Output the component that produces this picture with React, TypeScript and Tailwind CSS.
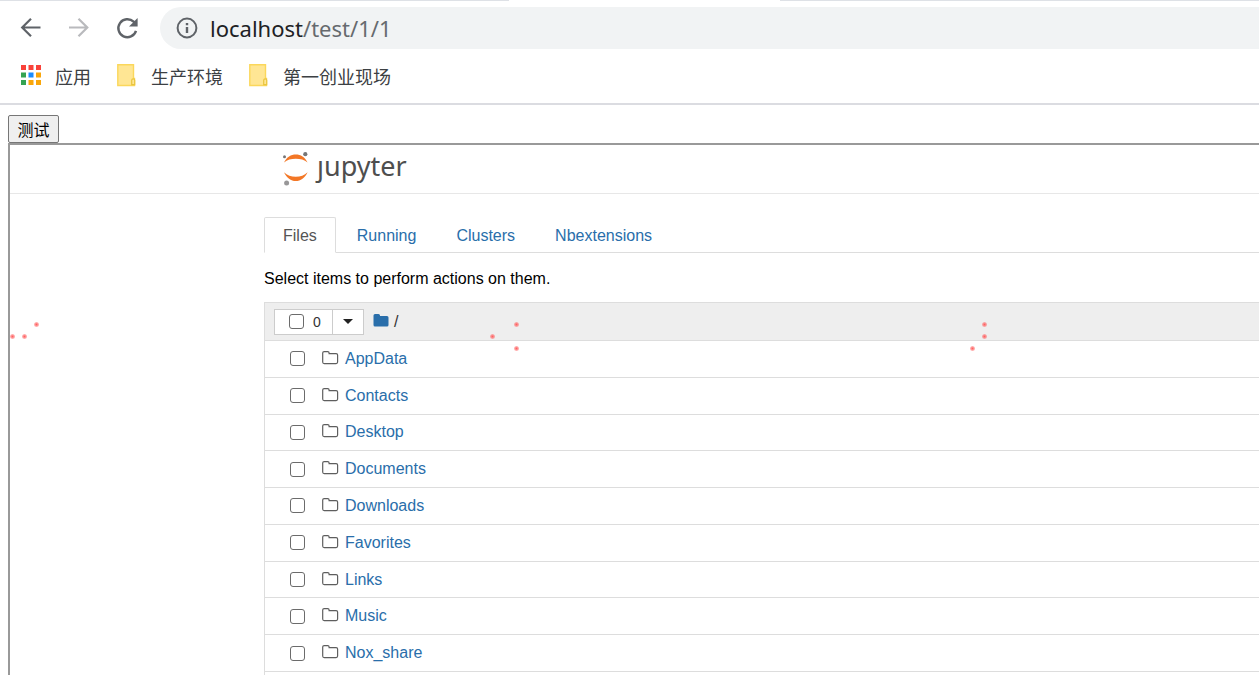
import { clsx } from 'clsx';
import { useState } from 'react';

const tabs = ['Files', 'Running', 'Clusters', 'Nbextensions'];

const folders = [
  'AppData',
  'Contacts',
  'Desktop',
  'Documents',
  'Downloads',
  'Favorites',
  'Links',
  'Music',
  'Nox_share',
];

const bookmarks = ['生产环境', '第一创业现场'];

const appColors = [
  '#f9423a',
  '#f9423a',
  '#f9423a',
  '#34a353',
  '#1a8cff',
  '#f9a60a',
  '#34a353',
  '#f9a60a',
  '#f9a60a',
];

// pointer sparks floating over the page
const sparks = [
  [12, 336],
  [24, 336],
  [36, 324],
  [492, 336],
  [516, 324],
  [516, 348],
  [984, 324],
  [984, 336],
  [972, 348],
];

const checkboxClass =
  'size-[15px] shrink-0 appearance-none rounded-[3px] border border-[#6b6b6b] bg-white checked:bg-[#296eaa]';

const BackIcon = () => (
  <svg viewBox="0 0 24 24" className="size-6" fill="none" stroke="currentColor" strokeWidth="2.2">
    <path d="M21.500 11.500H3.500M12 2.700 3.200 11.500l8.800 8.800" />
  </svg>
);

const ForwardIcon = () => (
  <svg viewBox="0 0 24 24" className="size-6" fill="none" stroke="currentColor" strokeWidth="2.2">
    <path d="M2 11.500h18M11.500 2.700l8.800 8.800-8.800 8.800" />
  </svg>
);

const ReloadIcon = () => (
  <svg viewBox="0 0 24 24" className="size-6" fill="none" stroke="currentColor" strokeWidth="2.4">
    <path d="M21 14.800A9 9 0 1 1 18.600 5.700L20 7.100" />
    <path d="M22.600 2v8.600H14z" fill="currentColor" stroke="none" />
  </svg>
);

const InfoIcon = () => (
  <svg viewBox="0 0 22 22" className="size-[22px]" fill="none" stroke="#5f6368" strokeWidth="2">
    <circle cx="11" cy="11" r="9.4" />
    <path d="M11 10v6M11 6v2.2" strokeWidth="2.4" />
  </svg>
);

const AppsIcon = () => (
  <svg viewBox="0 0 20 22" className="h-[22px] w-5">
    {appColors.map((color, i) => (
      <rect
        key={i}
        x={(i % 3) * 7.5}
        y={Math.floor(i / 3) * 7.5}
        width="5"
        height="5"
        fill={color}
      />
    ))}
  </svg>
);

const BookmarkIcon = () => (
  <svg viewBox="0 0 19 24" className="h-6 w-[19px]">
    <path d="M.8.8h15.700v13.700h1v7H.8z" fill="#ffe694" stroke="#fbd75b" strokeWidth="1.400" />
    <path d="M14.700 20.600v-4.400q0-1.400 1.500-1.400t1.500 1.400v4.400z" fill="#ffe694" stroke="#e9c53f" strokeWidth="1.200" />
  </svg>
);

const JupyterMark = () => (
  <svg viewBox="0 0 26 34" className="h-[34px] w-[26px]">
    <path d="M1 10.600C3.600 4.800 8 2.400 12.800 2.400S22 4.800 24.600 10.600C21.400 7.800 17.400 6.800 12.800 6.800S4.200 7.800 1 10.600z" fill="#f37726" />
    <path d="M1 20.200C3.600 26 8 29 12.800 29s9.200-3 11.800-8.800C21.400 23.400 17.400 24.800 12.800 24.800S4.200 23.400 1 20.200z" fill="#f37726" />
    <circle cx="1.500" cy="4.700" r="1.500" fill="#767677" />
    <circle cx="22.300" cy="2.200" r="2.100" fill="#767677" />
    <circle cx="3.600" cy="31" r="2.500" fill="#989798" />
  </svg>
);

const FolderOutline = () => (
  <svg viewBox="0 0 17 16" className="h-4 w-[17px]" fill="none" stroke="#5e5e5e" strokeWidth="1.200">
    <path d="M2.200.6h3.500q1.400 0 1.400 1.400v.6h7q1.500 0 1.500 1.500v7q0 1.500-1.500 1.500H2.200q-1.500 0-1.500-1.500v-9q0-1.500 1.500-1.500z" />
  </svg>
);

const BrowserBar = () => (
  <header className="border-b-2 border-[#dbdce1] pb-[14px]">
    <div className="flex h-px">
      <div className="w-[509px] bg-[#dee1e6]" />
      <div className="w-[271px]" />
      <div className="flex-1 bg-[#dee1e6]" />
    </div>
    <div className="flex items-center pt-[6px] pl-[19px]">
      <button type="button" aria-label="Back" className="text-[#5f6368]">
        <BackIcon />
      </button>
      <button type="button" aria-label="Forward" className="ml-6 text-[#b9babd]" disabled>
        <ForwardIcon />
      </button>
      <button type="button" aria-label="Reload" className="ml-6 text-[#5f6368]">
        <ReloadIcon />
      </button>
      <div className="ml-[21px] flex h-[42px] flex-1 items-center gap-3 rounded-l-full bg-[#f1f3f4] pl-4">
        <InfoIcon />
        <p className="font-['Noto_Sans',sans-serif] text-[22px] leading-7 text-[#666a6e]">
          <span className="text-[#202124]">localhost</span>/test/1/1
        </p>
      </div>
    </div>
    <nav className="mt-[14px] flex h-[26px] items-center pl-[21px] font-['Noto_Sans_CJK_SC',sans-serif] text-[18px] leading-[26px] text-[#3c4043]">
      <a href="#apps" className="flex items-center gap-[14px]">
        <AppsIcon />
        应用
      </a>
      {bookmarks.map((name) => (
        <a key={name} href="#bookmark" className="ml-[26px] flex items-center gap-[15px]">
          <BookmarkIcon />
          {name}
        </a>
      ))}
    </nav>
  </header>
);

const FileList = () => (
  <section className="mt-[11px] border-t border-l border-[#dddddd]">
    <div className="flex h-[38px] items-center border-b border-[#dddddd] bg-[#eeeeee] pl-[9px]">
      <div className="flex h-[26px] border border-[#cccccc] bg-white text-[14px] text-[#333333]">
        <label className="flex w-[57px] items-center gap-[9px] pl-[14px]">
          <input type="checkbox" className={checkboxClass} />0
        </label>
        <button
          type="button"
          aria-label="Select by type"
          className="flex w-[31px] items-center justify-center border-l border-[#cccccc]"
        >
          <svg viewBox="0 0 10 5" className="h-[5px] w-[10px]">
            <path d="M0 0h10L5 5z" fill="#222" />
          </svg>
        </button>
      </div>
      <a href="#root" aria-label="Home folder" className="ml-[9px]">
        <svg viewBox="0 0 16 16" className="size-4">
          <path d="M2 0h3.500Q7 0 7 1.500V2h7q1.500 0 1.500 1.500v7.500q0 1.500-1.500 1.500H2q-1.500 0-1.500-1.500v-9.500Q.5 0 2 0z" fill="#296eaa" />
        </svg>
      </a>
      <span className="ml-[5px] text-[#333333]">/</span>
    </div>
    <ul className="grid min-h-[331px] auto-rows-fr">
      {folders.map((folder) => (
        <li key={folder} className="flex items-center border-b border-[#dddddd] pl-[25px]">
          <input type="checkbox" aria-label={folder} className={checkboxClass} />
          <a href="#folder" className="ml-[17px] flex items-center gap-[6px] text-[#296eaa]">
            <FolderOutline />
            {folder}
          </a>
        </li>
      ))}
    </ul>
    <div className="h-9" />
  </section>
);

const JupyterPage = () => {
  const [active, setActive] = useState('Files');

  return (
    <main className="min-h-0 flex-1 overflow-hidden border-t-2 border-l-2 border-[#999999] font-['Liberation_Sans',Arial,sans-serif] text-[16px] leading-6 text-black">
      <div className="h-[49px] border-b border-[#e7e7e7] pl-[273px]">
        <a href="#home" aria-label="jupyter" className="flex pt-[7px]">
          <JupyterMark />
          <span className="ml-2 font-['Noto_Sans',sans-serif] text-[27px] leading-7 text-[#4e4e4e]">
            ȷupyter
          </span>
        </a>
      </div>
      <div className="pt-[23px] pl-[254px]">
        <div role="tablist" className="flex h-9 gap-[2px] border-b border-[#dddddd]">
          {tabs.map((tab) => (
            <button
              key={tab}
              type="button"
              role="tab"
              aria-selected={active === tab}
              onClick={() => setActive(tab)}
              className={clsx(
                'h-9 rounded-t-[2px] border px-[18px] pt-[2px]',
                active === tab
                  ? 'border-[#dddddd] border-b-white bg-white text-[#555555]'
                  : 'border-transparent text-[#296eaa]',
              )}
            >
              {tab}
            </button>
          ))}
        </div>
        <p className="mt-[14px]">Select items to perform actions on them.</p>
        <FileList />
      </div>
    </main>
  );
};

const App = () => (
  <div className="relative flex h-screen flex-col overflow-hidden bg-white">
    <BrowserBar />
    <div className="flex min-h-0 flex-1 flex-col items-stretch pt-[10px] pl-2">
      <button
        type="button"
        className="h-7 w-[51px] shrink-0 self-start rounded-[2px] border border-[#767676] bg-[#efefef] font-['Noto_Sans_CJK_SC',sans-serif] text-[16px] leading-6 text-black"
      >
        测试
      </button>
      <JupyterPage />
    </div>
    {sparks.map(([x, y]) => (
      <span
        key={`${x}-${y}`}
        className="pointer-events-none absolute size-[5px] rounded-full bg-radial from-[#ff6060] to-[#ff606022]"
        style={{ left: x - 2, top: y - 2 }}
      />
    ))}
  </div>
);

export default App;
